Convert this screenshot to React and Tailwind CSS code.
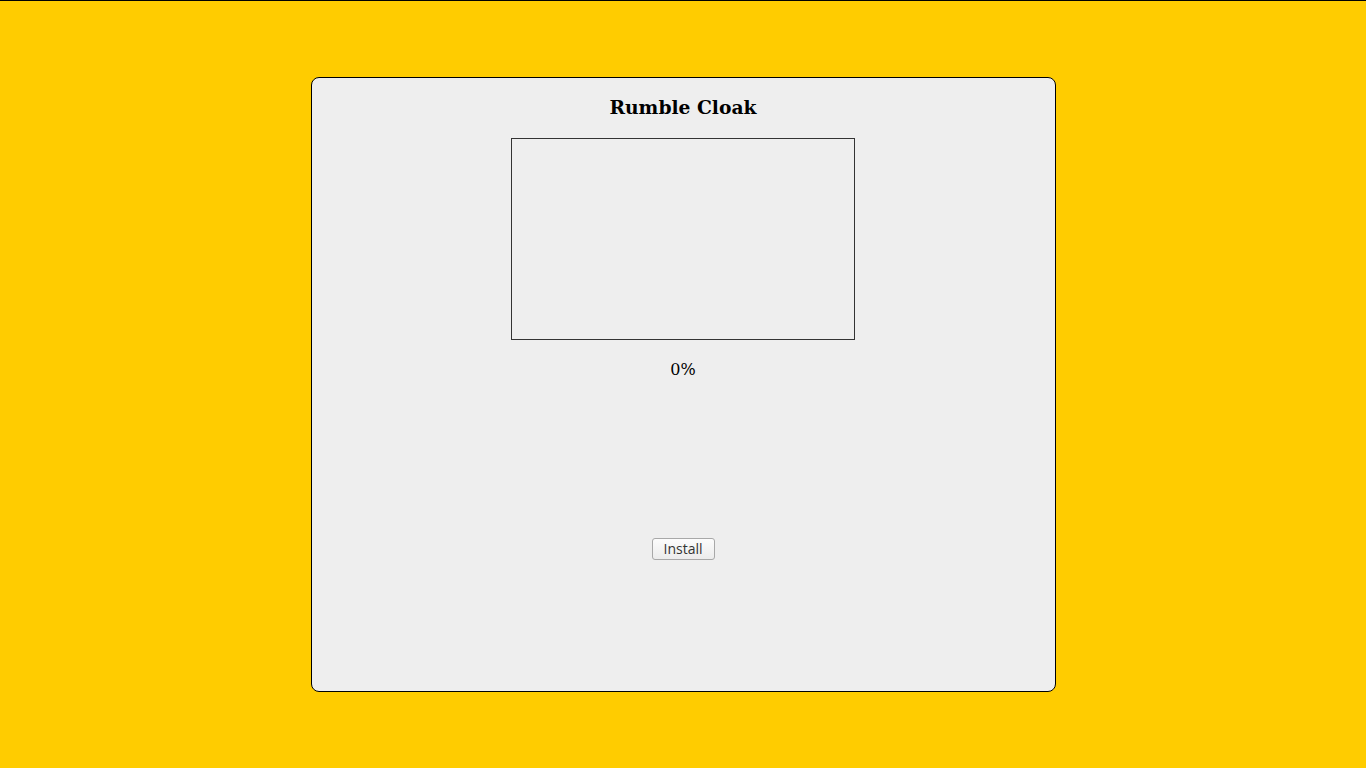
import React from 'react';

const App = () => {
  return (
    <div className="min-h-screen bg-[#ffcc00] border-t border-black" style={{ fontFamily: '"DejaVu Serif", serif' }}>
      <div className="mx-auto mt-[76px] w-[745px] h-[615px] bg-[#eeeeee] border border-black rounded-[8px] flex flex-col items-center">
        <h1 className="mt-[17px] text-[18.72px] leading-[24px] font-bold text-black">Rumble Cloak</h1>
        <div className="mt-[19px] w-[344px] h-[202px] border border-[#333333]"></div>
        <p className="mt-[18px] text-[16px] leading-[24px] text-black">0%</p>
        <button
          type="button"
          className="mt-[156px] h-[22px] w-[63px] text-[14px] leading-[20px] text-[#333333] bg-gradient-to-b from-[#fcfcfc] to-[#ececec] border border-[#a8a8a8] rounded-[3px]"
          style={{ fontFamily: '"Open Sans", sans-serif' }}
        >
          Install
        </button>
      </div>
    </div>
  );
};

export default App;
